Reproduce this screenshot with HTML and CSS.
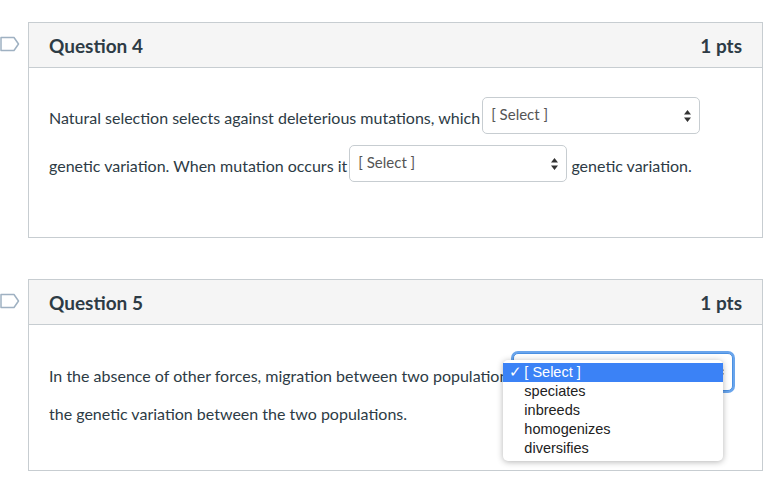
FILE: index.html
```html
<!DOCTYPE html>
<html lang="en">
<head>
    <meta charset="UTF-8">
    <title>Quiz</title>
    <link rel="stylesheet" href="styles.css">
</head>
<body>
<div class="quiz">
    <div class="question-row">
        <div class="flag-col">
            <svg class="flag" width="20" height="16" viewBox="0 0 20 16">
                <path d="M1 1.5 H14 L18.5 8 L14 14.5 H1 Z" fill="none" stroke="#9fb1c2" stroke-width="1.5" stroke-linejoin="round"/>
            </svg>
        </div>
        <div class="question">
            <div class="question-header">
                <span class="question-title">Question 4</span>
                <span class="question-points">1 pts</span>
            </div>
            <div class="question-body">
                <p class="question-text">Natural selection selects against deleterious mutations, which
                    <span class="dropdown"><span class="label">[ Select ]</span><span class="arrows"><svg width="7" height="12" viewBox="0 0 7 12"><path d="M3.5 0 L7 4.5 H0 Z M3.5 12 L7 7.5 H0 Z" fill="#333"/></svg></span></span>
                    genetic variation. When mutation occurs it
                    <span class="dropdown"><span class="label">[ Select ]</span><span class="arrows"><svg width="7" height="12" viewBox="0 0 7 12"><path d="M3.5 0 L7 4.5 H0 Z M3.5 12 L7 7.5 H0 Z" fill="#333"/></svg></span></span>
                    genetic variation.</p>
            </div>
        </div>
    </div>

    <div class="question-row">
        <div class="flag-col">
            <svg class="flag" width="20" height="16" viewBox="0 0 20 16">
                <path d="M1 1.5 H14 L18.5 8 L14 14.5 H1 Z" fill="none" stroke="#9fb1c2" stroke-width="1.5" stroke-linejoin="round"/>
            </svg>
        </div>
        <div class="question">
            <div class="question-header">
                <span class="question-title">Question 5</span>
                <span class="question-points">1 pts</span>
            </div>
            <div class="question-body body-short">
                <p class="question-text">In the absence of other forces, migration between two populations
                    <span class="dropdown focused"><span class="label"></span><span class="arrows"><svg width="7" height="12" viewBox="0 0 7 12"><path d="M3.5 0 L7 4.5 H0 Z M3.5 12 L7 7.5 H0 Z" fill="#333"/></svg></span>
                        <span class="menu">
                            <span class="option selected"><span class="check">✓</span>[ Select ]</span>
                            <span class="option">speciates</span>
                            <span class="option">inbreeds</span>
                            <span class="option">homogenizes</span>
                            <span class="option">diversifies</span>
                        </span>
                    </span>
                    the genetic variation between the two populations.</p>
            </div>
        </div>
    </div>
</div>
</body>
</html>
```

FILE: styles.css
```css
body {
    margin: 0;
    background: #fff;
    font-family: Lato, "Open Sans", sans-serif;
    color: #2d3b45;
}
.quiz {
    width: 778px;
    padding-top: 22px;
}
.question-row {
    display: flex;
    margin-bottom: 41px;
}
.question-row:last-child {
    margin-bottom: 0;
}
.flag-col {
    width: 28px;
    flex-shrink: 0;
    padding-top: 14px;
}
.flag {
    display: block;
}
.question {
    width: 733px;
    border: 1px solid #c7cdd1;
}
.question-header {
    display: flex;
    justify-content: space-between;
    align-items: center;
    height: 44px;
    padding: 0 20px;
    background: #f5f5f5;
    border-bottom: 1px solid #c7cdd1;
}
.question-title,
.question-points {
    font-size: 19px;
    font-weight: 700;
}
.question-body {
    padding: 26px 20px 47px;
}
.body-short {
    padding: 32px 20px 37px;
}
.question-text {
    margin: 0;
    font-size: 16px;
    line-height: 48px;
}
.body-short .question-text {
    line-height: 38px;
}
.dropdown {
    position: relative;
    display: inline-flex;
    align-items: center;
    box-sizing: border-box;
    width: 218px;
    height: 37px;
    padding: 0 8px 3px;
    vertical-align: middle;
    line-height: 20px;
    font-size: 15px;
    color: #555;
    border: 1px solid #c7cdd1;
    border-radius: 5px;
    background: #fff;
    margin: -8px 0 0 -2px;
}
.arrows {
    margin-left: auto;
    padding-top: 3px;
    display: flex;
}
.dropdown.focused {
    width: 220px;
    height: 38px;
    margin-left: -6px;
    margin-top: -12px;
    border-color: #4a90e2;
    box-shadow: 0 0 0 2px #6aa5ec;
}
.menu {
    position: absolute;
    left: -11px;
    top: 6px;
    width: 220px;
    padding: 3px 0;
    background: #fff;
    border-radius: 5px;
    box-shadow: 0 1px 6px rgba(0, 0, 0, 0.3);
    font-family: "Liberation Sans", Arial, sans-serif;
    font-size: 14.5px;
    color: #222;
    line-height: 19px;
}
.option {
    display: block;
    padding-left: 21px;
    height: 19px;
}
.option.selected {
    position: relative;
    background: #3b82f6;
    color: #fff;
}
.check {
    position: absolute;
    left: 6px;
}
```
